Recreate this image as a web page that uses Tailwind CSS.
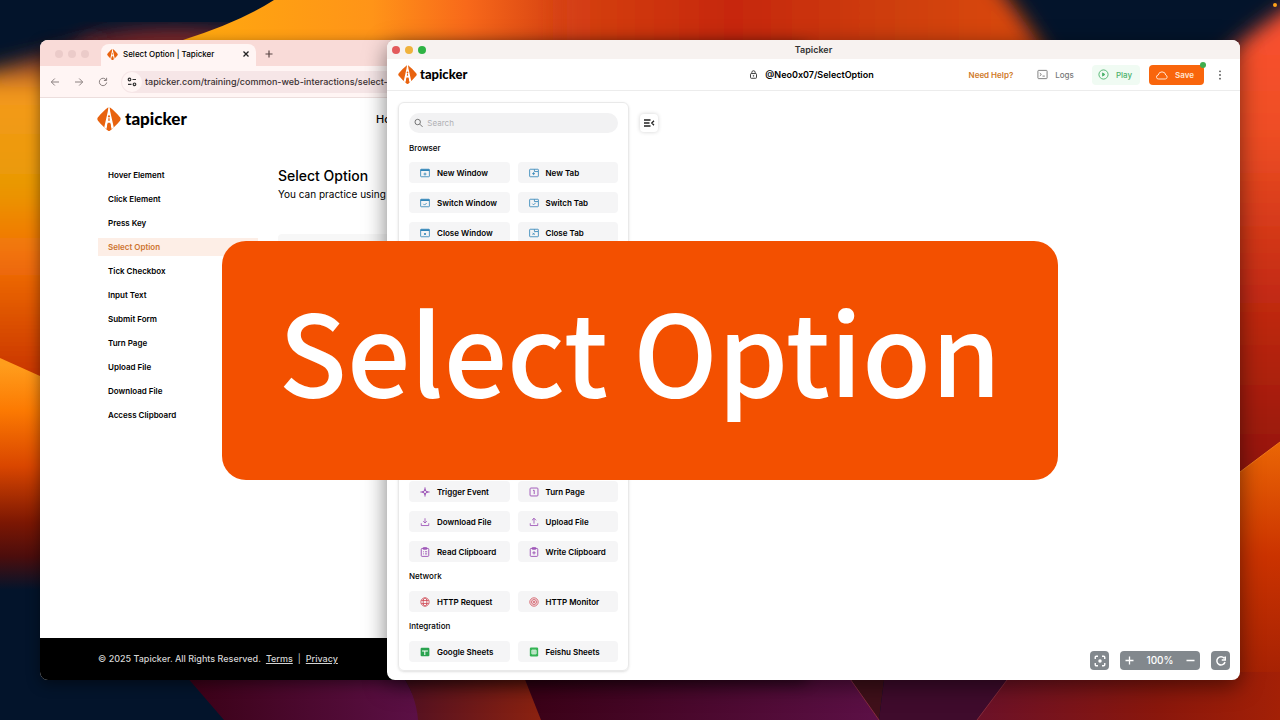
<!DOCTYPE html>
<html lang="en">
<head>
    <meta charset="UTF-8">
    <meta name="viewport" content="width=device-width, initial-scale=1.0">
    <title>Tapicker - Select Option</title>

    <!-- Tailwind CSS -->
    <script src="https://cdn.jsdelivr.net/npm/@tailwindcss/browser@4"></script>
</head>
<body class="relative h-screen overflow-hidden bg-[#03142b] font-['Inter',sans-serif] text-black">
    <!-- Shared icons -->
    <svg class="hidden">
        <symbol id="logo" viewBox="0 0 24 24">
            <path fill="#e8630f" d="M10.600.8C11.400 0 12.600 0 13.400.8c2.600 2 6.800 6 9.600 9.500.9 1.100.9 2.300 0 3.400-2.800 3.500-7 7.500-9.600 9.500-.8.800-2 .8-2.800 0C8 21.200 3.800 17.200 1 13.700c-.9-1.100-.9-2.300 0-3.400C3.800 6.800 8 2.800 10.600.8z"/>
            <path fill="#fff" d="M11.400 0h1.200l.6 4.500 3.600 16-2.300 1.800-1.200-6.500h-2.600l-1.200 6.500-2.300-1.800 3.600-16z"/>
            <path fill="#e8630f" d="M11.200 13.700l.4-3h.8l.4 3zM10.600 17h2.800l1 5.500L12 24l-2.400-1.500z"/>
            <circle cx="12" cy="9.300" r="1.100" fill="#e8630f"/>
        </symbol>
        <symbol id="window" viewBox="0 0 24 24">
            <rect x="1.500" y="3" width="21" height="18" rx="1.500" fill="none" stroke="currentColor" stroke-width="2"/>
            <path fill="currentColor" d="M1.500 3h21v4h-21z"/>
        </symbol>
        <symbol id="tab" viewBox="0 0 24 24">
            <path fill="none" stroke="currentColor" stroke-width="2" d="M13 3H3A1.500 1.500 0 0 0 1.500 4.500v15A1.500 1.500 0 0 0 3 21h18a1.500 1.500 0 0 0 1.500-1.500V8.500H13z"/>
            <path fill="none" stroke="currentColor" stroke-width="2" d="M13 3h8a1.500 1.500 0 0 1 1.500 1.500v4"/>
        </symbol>
    </svg>

    <!-- Wallpaper -->
    <svg class="absolute inset-0 h-full w-full" viewBox="0 0 1280 720" preserveAspectRatio="none">
        <defs>
            <filter id="soft" x="-20%" y="-20%" width="140%" height="140%"><feGaussianBlur stdDeviation="10"/></filter>
            <linearGradient id="top" gradientUnits="userSpaceOnUse" x1="200" y1="0" x2="1060" y2="0">
                <stop offset="0" stop-color="#ffa70f"/>
                <stop offset=".2" stop-color="#ff9418"/>
                <stop offset=".31" stop-color="#f8691a"/>
                <stop offset=".42" stop-color="#d64212"/>
                <stop offset=".62" stop-color="#c6270f"/>
                <stop offset=".82" stop-color="#cf400d"/>
                <stop offset="1" stop-color="#dd4a10"/>
            </linearGradient>
            <linearGradient id="left" gradientUnits="userSpaceOnUse" x1="0" y1="55" x2="0" y2="375">
                <stop offset="0" stop-color="#7d2a2c"/>
                <stop offset=".12" stop-color="#f59a1c"/>
                <stop offset=".4" stop-color="#e99a04"/>
                <stop offset=".62" stop-color="#f37207"/>
                <stop offset="1" stop-color="#c93503"/>
            </linearGradient>
            <linearGradient id="leaf" gradientUnits="userSpaceOnUse" x1="0" y1="365" x2="0" y2="590">
                <stop offset="0" stop-color="#ff9d1c"/>
                <stop offset=".2" stop-color="#fc7a02"/>
                <stop offset=".45" stop-color="#d94600"/>
                <stop offset=".7" stop-color="#7c1703"/>
                <stop offset=".85" stop-color="#4c0d0c"/>
                <stop offset="1" stop-color="#03142b"/>
            </linearGradient>
            <linearGradient id="right" gradientUnits="userSpaceOnUse" x1="0" y1="20" x2="0" y2="470">
                <stop offset="0" stop-color="#f95030"/>
                <stop offset=".25" stop-color="#ee4e24"/>
                <stop offset=".6" stop-color="#c42b12"/>
                <stop offset="1" stop-color="#931509"/>
            </linearGradient>
            <linearGradient id="petal" gradientUnits="userSpaceOnUse" x1="0" y1="445" x2="0" y2="720">
                <stop offset="0" stop-color="#ea6505"/>
                <stop offset=".4" stop-color="#cb3300"/>
                <stop offset="1" stop-color="#981b05"/>
            </linearGradient>
            <linearGradient id="plum" x1="0" y1="0" x2="1" y2="0">
                <stop offset="0" stop-color="#3a0116"/>
                <stop offset="1" stop-color="#5c1046"/>
            </linearGradient>
            <linearGradient id="rust" x1="0" y1="0" x2="1" y2="0">
                <stop offset="0" stop-color="#511022"/>
                <stop offset="1" stop-color="#8c2210"/>
            </linearGradient>
            <linearGradient id="ember" x1="0" y1="0" x2="1" y2="0">
                <stop offset="0" stop-color="#6b1128"/>
                <stop offset=".6" stop-color="#8a170c"/>
                <stop offset="1" stop-color="#a32006"/>
            </linearGradient>
        </defs>
        <path fill="#03142b" d="M0 0h1280v720H0z"/>
        <ellipse cx="175" cy="50" rx="95" ry="20" fill="#8e2c2a" filter="url(#soft)"/>
        <path fill="url(#left)" filter="url(#soft)" d="M-60 84L20 62l80-24v360H-60z"/>
        <path fill="url(#top)" d="M274 0h640v200H60V90l123-50Q240 22 274 0z"/>
        <path fill="url(#top)" filter="url(#soft)" d="M560-30H985q34 40 64 90v40H560z"/>
        <path fill="url(#right)" filter="url(#soft)" d="M1340-24q-70 40-106 72l-44 40v400h150z"/>
        <path fill="url(#leaf)" d="M0 358l40 18 60 30v190H0z"/>
        <path fill="url(#petal)" d="M1180 508l60-36 40-30v278h-100z"/>
        <path fill="none" stroke="#f07a18" d="M1240 472l40-30"/>
        <path fill="url(#plum)" d="M186 676l38 44h196q-4-26-20-48z"/>
        <path fill="url(#rust)" d="M400 672q16 22 18 48h124l-19-48z"/>
        <path fill="url(#plum)" d="M522 672l19 48h338l-33-48z"/>
        <path fill="#40101a" d="M846 672l33 48 6-48z"/>
        <path fill="#3f0b2c" d="M885 672l-6 48h98l36-48z"/>
        <path fill="url(#ember)" d="M1013 672l-36 48h303v-48z"/>
        <path fill="none" stroke="#8a2c3c" d="M848 676l31 44M1010 676l-33 44"/>
        <circle cx="1275" cy="5" r="2" fill="#ffa31a"/>
    </svg>

    <!-- Browser window -->
    <section class="absolute top-10 bottom-10 left-10 flex w-3/5 flex-col overflow-hidden rounded-lg bg-white shadow-[0_4px_14px_rgba(0,0,0,0.45)]">
        <!-- Tab strip -->
        <div class="flex h-[26px] items-end bg-[#f9dbd8]">
            <div class="flex h-full w-[61px] items-center gap-[5px] pt-[2px] pl-[15px]">
                <span class="size-2 rounded-full bg-[#ebcbc9]"></span>
                <span class="size-2 rounded-full bg-[#ebcbc9]"></span>
                <span class="size-2 rounded-full bg-[#ebcbc9]"></span>
            </div>
            <div class="flex h-[22px] w-[155px] items-center rounded-t-lg bg-[#fff5f4] px-[6px] pb-[2px]">
                <svg class="mr-[5px] size-[11px]"><use href="#logo"/></svg>
                <span class="flex-1 text-[8px] font-medium">Select Option | Tapicker</span>
                <button type="button" aria-label="Close tab">
                    <svg class="size-2" viewBox="0 0 8 8" stroke="#222" stroke-width="1.300"><path d="M1.500 1.500l5 5M6.500 1.500l-5 5"/></svg>
                </button>
            </div>
            <button type="button" aria-label="New tab" class="flex h-full items-center px-[9px] pt-[2px]">
                <svg class="size-2" viewBox="0 0 8 8" stroke="#5a4645" stroke-width="1.200"><path d="M4 .5v7M.5 4h7"/></svg>
            </button>
        </div>
        <!-- Toolbar -->
        <div class="flex h-8 items-center border-b border-[#ecdedd] bg-[#fff5f4] pl-[10px] text-[#8b8180]">
            <button type="button" aria-label="Back" class="mr-[14px]">
                <svg class="size-[10px]" viewBox="0 0 10 10" fill="none" stroke="currentColor"><path d="M9 5H1.500M4.800 1.500L1.300 5l3.500 3.500"/></svg>
            </button>
            <button type="button" aria-label="Forward" class="mr-[14px]">
                <svg class="size-[10px]" viewBox="0 0 10 10" fill="none" stroke="currentColor"><path d="M1 5h7.500M5.200 1.500L8.700 5 5.200 8.500"/></svg>
            </button>
            <button type="button" aria-label="Reload" class="mr-[13px]">
                <svg class="size-[10px]" viewBox="0 0 10 10" fill="none" stroke="currentColor"><path d="M8.300 3.200A3.700 3.700 0 1 0 8.700 5.500M8.600.8v2.700H5.900"/></svg>
            </button>
            <div class="flex h-[22px] flex-1 items-center rounded-full bg-[#f6e6e7] pl-px">
                <span class="flex size-5 items-center justify-center rounded-full bg-[#fff5f4] text-[#333]">
                    <svg class="size-[10px]" viewBox="0 0 10 10" fill="none" stroke="currentColor" stroke-width="1.200"><circle cx="2.500" cy="2.500" r="1.300"/><path d="M5.500 2.500H9"/><circle cx="7.500" cy="7.300" r="1.300"/><path d="M1 7.300h3.500"/></svg>
                </span>
                <input type="text" aria-label="Address" value="tapicker.com/training/common-web-interactions/select-option" class="ml-[3px] h-5 flex-1 bg-transparent text-[9px] font-medium text-[#3a3031] outline-none">
            </div>
        </div>
        <!-- Page -->
        <header class="flex h-[42px] items-center pl-[57px]">
            <a href="#" class="flex w-[279px] items-center gap-1">
                <svg class="size-6"><use href="#logo"/></svg>
                <span class="font-['Lato',sans-serif] text-[17px] leading-6 font-black">tapicker</span>
            </a>
            <a href="#" class="text-[11px] font-medium">Home</a>
        </header>
        <div class="flex flex-1 pt-[26px] pl-[58px]">
            <nav class="flex w-[160px] flex-col gap-[6px] text-[8px] leading-[18px] font-semibold">
                <a href="#" class="pl-[10px]">Hover Element</a>
                <a href="#" class="pl-[10px]">Click Element</a>
                <a href="#" class="pl-[10px]">Press Key</a>
                <a href="#" class="bg-[#fdeee6] pl-[10px] text-[#cd7430]">Select Option</a>
                <a href="#" class="pl-[10px]">Tick Checkbox</a>
                <a href="#" class="pl-[10px]">Input Text</a>
                <a href="#" class="pl-[10px]">Submit Form</a>
                <a href="#" class="pl-[10px]">Turn Page</a>
                <a href="#" class="pl-[10px]">Upload File</a>
                <a href="#" class="pl-[10px]">Download File</a>
                <a href="#" class="pl-[10px]">Access Clipboard</a>
            </nav>
            <main class="flex-1 pl-5">
                <h1 class="text-sm leading-5 font-medium">Select Option</h1>
                <p class="text-[10px] leading-4">You can practice using</p>
                <div class="mt-8 h-40 rounded-sm bg-[#f7f7f7]"></div>
            </main>
        </div>
        <footer class="flex h-[42px] items-center gap-[5px] bg-black pl-[58px] text-[9px] text-[#d4d4d4]">
            <span class="font-medium">© 2025 Tapicker. All Rights Reserved.</span>
            <a href="#" class="font-medium underline">Terms</a>
            <span>|</span>
            <a href="#" class="font-medium underline">Privacy</a>
        </footer>
    </section>

    <!-- Editor window -->
    <section class="absolute top-10 right-10 bottom-10 left-[387px] flex flex-col overflow-hidden rounded-lg bg-white shadow-[0_6px_22px_rgba(0,0,0,0.5)]">
        <div class="relative flex h-[19px] items-center gap-[5px] bg-[#f7f2f0] pl-[5px]">
            <span class="size-2 rounded-full bg-[#e35a5c]"></span>
            <span class="size-2 rounded-full bg-[#f0b23c]"></span>
            <span class="size-2 rounded-full bg-[#2fb344]"></span>
            <span class="absolute inset-x-0 text-center text-[9px] font-semibold text-[#333]">Tapicker</span>
        </div>
        <header class="grid h-8 grid-cols-[1fr_auto_1fr] items-center border-b border-[#ececec] pr-[15px] pl-[11px]">
            <a href="#" class="flex items-center gap-[3px]">
                <svg class="size-[19px]"><use href="#logo"/></svg>
                <span class="pb-px font-['Lato',sans-serif] text-[13px] leading-5 font-black">tapicker</span>
            </a>
            <div class="flex items-center gap-[7px] text-[9px] font-semibold">
                <svg class="size-[9px]" viewBox="0 0 24 24" fill="none" stroke="#333" stroke-width="2.500"><rect x="4" y="9.500" width="16" height="12.500" rx="2"/><path d="M7.500 9.500V6.500a4.500 4.500 0 0 1 9 0v3"/><circle cx="12" cy="15.700" r="1"/></svg>
                <span>@Neo0x07/SelectOption</span>
            </div>
            <div class="flex items-center justify-end text-[8px] font-medium">
                <a href="#" class="mr-6 font-semibold text-[#cf7a28]">Need Help?</a>
                <button type="button" class="mr-[18px] flex items-center gap-[7px] text-[#777]">
                    <svg class="size-[11px]" viewBox="0 0 24 24" fill="none" stroke="currentColor" stroke-width="2"><rect x="2" y="3" width="20" height="18" rx="1.500"/><path d="M6 9l3.500 3L6 15M12 15.500h5"/></svg>
                    Logs
                </button>
                <button type="button" class="mr-[9px] flex h-5 items-center gap-[7px] rounded bg-[#f0fbf3] pr-2 pl-[6px] text-[#4db26c]">
                    <svg class="size-[11px]" viewBox="0 0 24 24" fill="none" stroke="currentColor" stroke-width="2"><circle cx="12" cy="12" r="10"/><path fill="currentColor" d="M10 8.500l5 3.500-5 3.500z"/></svg>
                    Play
                </button>
                <button type="button" class="relative mr-[11px] flex h-5 items-center gap-[7px] rounded bg-[#f9650c] pr-[10px] pl-[7px] font-semibold text-[#ffe6d4]">
                    <svg class="size-3" viewBox="0 0 24 24" fill="none" stroke="currentColor" stroke-width="2" stroke-linejoin="round"><path d="M5.500 20h13a4 4 0 0 0 1-7.800 7.600 7.600 0 0 0-15-.2A4 4 0 0 0 5.500 20z"/></svg>
                    Save
                    <span class="absolute -top-[3px] -right-[2px] size-[6px] rounded-full bg-[#3fae4e]"></span>
                </button>
                <button type="button" aria-label="More">
                    <svg class="size-[10px]" viewBox="0 0 10 10" fill="#555"><circle cx="5" cy="1.300" r=".9"/><circle cx="5" cy="5" r=".9"/><circle cx="5" cy="8.700" r=".9"/></svg>
                </button>
            </div>
        </header>
        <div class="flex flex-1 items-start gap-[11px] pt-[11px] pr-[10px] pb-[9px] pl-[11px]">
            <!-- Commands -->
            <aside class="flex w-[231px] flex-col justify-between self-stretch rounded-md border border-[#e9e9e9] p-[10px] pb-2 text-[8px] font-semibold shadow-sm">
                <div>
                    <div class="flex h-5 items-center gap-1 rounded-full bg-[#f2f2f3] px-[5px]">
                        <svg class="size-[10px]" viewBox="0 0 24 24" fill="none" stroke="#666" stroke-width="2.300"><circle cx="9.500" cy="9.500" r="7"/><path d="M15 15l7 7"/></svg>
                        <input type="search" aria-label="Search commands" placeholder="Search" class="h-4 w-full bg-transparent text-[8px] font-normal outline-none placeholder:text-[#b0b0b4]">
                    </div>
                    <h2 class="pt-[10px] pb-2 leading-[11px] font-medium">Browser</h2>
                    <div class="grid grid-cols-2 gap-x-2 gap-y-[9px]">
                        <button type="button" class="flex h-[21px] items-center gap-[7px] rounded bg-[#f5f5f6] pl-[11px] whitespace-nowrap">
                            <svg class="size-[10px] text-[#3386b8]" viewBox="0 0 24 24"><use href="#window"/><path d="M12 11v7M8.500 14.500h7" stroke="currentColor" stroke-width="2"/></svg>
                            New Window
                        </button>
                        <button type="button" class="flex h-[21px] items-center gap-[7px] rounded bg-[#f5f5f6] pl-[11px] whitespace-nowrap">
                            <svg class="size-[10px] text-[#3386b8]" viewBox="0 0 24 24"><use href="#tab"/><path d="M11 10v7M7.500 13.500h7" stroke="currentColor" stroke-width="2"/></svg>
                            New Tab
                        </button>
                        <button type="button" class="flex h-[21px] items-center gap-[7px] rounded bg-[#f5f5f6] pl-[11px] whitespace-nowrap">
                            <svg class="size-[10px] text-[#3386b8]" viewBox="0 0 24 24"><use href="#window"/><path d="M8 14l3 3 5-5" fill="none" stroke="currentColor" stroke-width="2"/></svg>
                            Switch Window
                        </button>
                        <button type="button" class="flex h-[21px] items-center gap-[7px] rounded bg-[#f5f5f6] pl-[11px] whitespace-nowrap">
                            <svg class="size-[10px] text-[#3386b8]" viewBox="0 0 24 24"><use href="#tab"/><path d="M8 13.500l3 3 5-5" fill="none" stroke="currentColor" stroke-width="2"/></svg>
                            Switch Tab
                        </button>
                        <button type="button" class="flex h-[21px] items-center gap-[7px] rounded bg-[#f5f5f6] pl-[11px] whitespace-nowrap">
                            <svg class="size-[10px] text-[#3386b8]" viewBox="0 0 24 24"><use href="#window"/><path d="M9.500 12l5 5M14.500 12l-5 5" stroke="currentColor" stroke-width="2"/></svg>
                            Close Window
                        </button>
                        <button type="button" class="flex h-[21px] items-center gap-[7px] rounded bg-[#f5f5f6] pl-[11px] whitespace-nowrap">
                            <svg class="size-[10px] text-[#3386b8]" viewBox="0 0 24 24"><use href="#tab"/><path d="M8.500 11.500l5 5M13.500 11.500l-5 5" stroke="currentColor" stroke-width="2"/></svg>
                            Close Tab
                        </button>
                    </div>
                </div>
                <div>
                    <div class="grid grid-cols-2 gap-x-2 gap-y-[9px]">
                        <button type="button" class="flex h-[21px] items-center gap-[7px] rounded bg-[#f5f5f6] pl-[11px] whitespace-nowrap">
                            <svg class="size-[10px] text-[#9a4fb5]" viewBox="0 0 24 24" fill="none" stroke="currentColor" stroke-width="2.400" stroke-linejoin="round"><path d="M12 4.500l2 5.500 5.500 2-5.500 2-2 5.500-2-5.500-5.500-2 5.500-2zM12 1v3.500M12 19.500V23M1 12h3.500M19.500 12H23"/></svg>
                            Trigger Event
                        </button>
                        <button type="button" class="flex h-[21px] items-center gap-[7px] rounded bg-[#f5f5f6] pl-[11px] whitespace-nowrap">
                            <svg class="size-[10px] text-[#9a4fb5]" viewBox="0 0 24 24" fill="none" stroke="currentColor" stroke-width="2.200"><rect x="2.500" y="2.500" width="19" height="19" rx="2"/><path d="M9.500 8H12.500v9"/></svg>
                            Turn Page
                        </button>
                        <button type="button" class="flex h-[21px] items-center gap-[7px] rounded bg-[#f5f5f6] pl-[11px] whitespace-nowrap">
                            <svg class="size-[10px] text-[#9a4fb5]" viewBox="0 0 24 24" fill="none" stroke="currentColor" stroke-width="2"><path d="M12 3v11M7.500 10l4.500 4.500 4.500-4.500M3 15v5.500h18V15"/></svg>
                            Download File
                        </button>
                        <button type="button" class="flex h-[21px] items-center gap-[7px] rounded bg-[#f5f5f6] pl-[11px] whitespace-nowrap">
                            <svg class="size-[10px] text-[#9a4fb5]" viewBox="0 0 24 24" fill="none" stroke="currentColor" stroke-width="2"><path d="M12 16V3M7 8l5-5 5 5M3 15v5.500h18V15"/></svg>
                            Upload File
                        </button>
                        <button type="button" class="flex h-[21px] items-center gap-[7px] rounded bg-[#f5f5f6] pl-[11px] whitespace-nowrap">
                            <svg class="size-[10px] text-[#9a4fb5]" viewBox="0 0 24 24" fill="none" stroke="currentColor" stroke-width="2.200"><rect x="3" y="3.500" width="18" height="19" rx="2"/><path d="M8 1.500h8v4H8zM7.500 11.500h2M12 11.500h5M7.500 16.500h2M12 16.500h5"/></svg>
                            Read Clipboard
                        </button>
                        <button type="button" class="flex h-[21px] items-center gap-[7px] rounded bg-[#f5f5f6] pl-[11px] whitespace-nowrap">
                            <svg class="size-[10px] text-[#9a4fb5]" viewBox="0 0 24 24" fill="none" stroke="currentColor" stroke-width="2.200"><rect x="3" y="3.500" width="18" height="19" rx="2"/><path d="M8 1.500h8v4H8zM12 10v8M8 14h8"/></svg>
                            Write Clipboard
                        </button>
                    </div>
                    <h2 class="pt-[9px] pb-[9px] leading-[11px] font-medium">Network</h2>
                    <div class="grid grid-cols-2 gap-x-2">
                        <button type="button" class="flex h-[21px] items-center gap-[7px] rounded bg-[#f5f5f6] pl-[11px] whitespace-nowrap">
                            <svg class="size-[10px] text-[#d04a57]" viewBox="0 0 24 24" fill="none" stroke="currentColor" stroke-width="2"><circle cx="12" cy="12" r="10"/><ellipse cx="12" cy="12" rx="4.500" ry="10"/><path d="M3 8.500h18M3 15.500h18"/></svg>
                            HTTP Request
                        </button>
                        <button type="button" class="flex h-[21px] items-center gap-[7px] rounded bg-[#f5f5f6] pl-[11px] whitespace-nowrap">
                            <svg class="size-[10px] text-[#d04a57]" viewBox="0 0 24 24" fill="none" stroke="currentColor" stroke-width="2"><circle cx="12" cy="12" r="10"/><circle cx="12" cy="12" r="6"/><circle cx="12" cy="12" r="2"/></svg>
                            HTTP Monitor
                        </button>
                    </div>
                    <h2 class="pt-[9px] pb-[9px] leading-[11px] font-medium">Integration</h2>
                    <div class="grid grid-cols-2 gap-x-2">
                        <button type="button" class="flex h-[21px] items-center gap-[7px] rounded bg-[#f5f5f6] pl-[11px] whitespace-nowrap">
                            <svg class="size-[10px]" viewBox="0 0 24 24"><rect x="1.500" y="2" width="21" height="20" rx="2.500" fill="#2aa34f"/><path d="M5 9.500h14M11.500 9.500V19" stroke="#fff" stroke-width="2.500"/></svg>
                            Google Sheets
                        </button>
                        <button type="button" class="flex h-[21px] items-center gap-[7px] rounded bg-[#f5f5f6] pl-[11px] whitespace-nowrap">
                            <svg class="size-[10px]" viewBox="0 0 24 24"><rect x="2" y="1" width="20" height="22" rx="3" fill="#35b455"/><path d="M7 7.500h10v9H7zM12 7.500v9M7 12h10" fill="none" stroke="#fff" stroke-width="2"/></svg>
                            Feishu Sheets
                        </button>
                    </div>
                </div>
            </aside>
            <button type="button" aria-label="Collapse panel" class="mt-3 flex size-[18px] items-center justify-center rounded bg-white shadow-[0_0_4px_rgba(0,0,0,0.18)]">
                <svg class="size-3" viewBox="0 0 24 24" fill="none" stroke="#222" stroke-width="2.600"><path d="M2 6h13M2 12h11M2 18h13M22 7.500L17.500 12l4.500 4.500"/></svg>
            </button>
            <!-- Zoom controls -->
            <div class="flex flex-1 items-center justify-end gap-[11px] self-end pb-px text-white">
                <button type="button" aria-label="Fit view" class="flex size-[19px] items-center justify-center rounded bg-[#82888d]">
                    <svg class="size-3" viewBox="0 0 24 24" fill="none" stroke="currentColor" stroke-width="2.800"><path d="M2.500 8V4.500a2 2 0 0 1 2-2H8M16 2.500h3.500a2 2 0 0 1 2 2V8M21.500 16v3.500a2 2 0 0 1-2 2H16M8 21.500H4.500a2 2 0 0 1-2-2V16"/><circle cx="12" cy="12" r="3.500" fill="currentColor" stroke="none"/></svg>
                </button>
                <div class="flex h-[19px] w-20 items-center justify-between rounded bg-[#82888d] px-[5px] text-[10px] font-medium">
                    <button type="button" aria-label="Zoom in"><svg class="size-[9px]" viewBox="0 0 9 9" stroke="currentColor" stroke-width="1.300"><path d="M4.500 .5v8M.5 4.500h8"/></svg></button>
                    <span>100%</span>
                    <button type="button" aria-label="Zoom out"><svg class="size-[9px]" viewBox="0 0 9 9" stroke="currentColor" stroke-width="1.300"><path d="M.5 4.500h8"/></svg></button>
                </div>
                <button type="button" aria-label="Reset" class="flex size-[19px] items-center justify-center rounded bg-[#82888d]">
                    <svg class="size-3" viewBox="0 0 24 24" fill="none" stroke="currentColor" stroke-width="3"><path d="M18.500 6.500A8.300 8.300 0 1 0 20 14M20.500 3v7h-7"/></svg>
                </button>
            </div>
        </div>
    </section>

    <!-- Title banner -->
    <div class="absolute inset-0 flex items-center justify-center">
        <div class="rounded-3xl bg-[#f35000] px-[57px] pt-[22px] pb-[46px] font-['Noto_Sans_CJK_SC',sans-serif] text-[112px] leading-[171px] font-medium whitespace-nowrap text-white">Select Option</div>
    </div>
</body>
</html>
